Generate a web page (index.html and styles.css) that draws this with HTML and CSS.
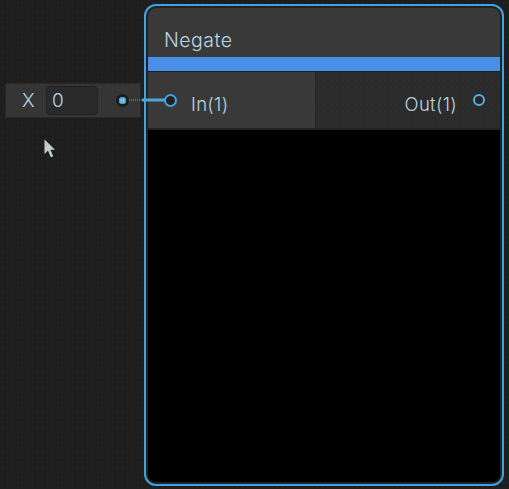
FILE: index.html
```html
<!DOCTYPE html>
<html>
<head>
<meta charset="utf-8">
<link rel="stylesheet" href="styles.css">
</head>
<body>
<div class="canvas">
  <div class="field">
    <span class="field-label">X</span>
    <div class="field-input">0</div>
    <span class="mini-port"><span class="mini-dot"></span></span>
  </div>

  <div class="node">
    <div class="node-inner">
      <div class="node-title">Negate</div>
      <div class="node-bar"></div>
      <div class="ports">
        <div class="port-in">
          <span class="port-circle"></span>
          <span class="port-label">In(1)</span>
        </div>
        <div class="port-out">
          <span class="port-label">Out(1)</span>
          <span class="port-circle out"></span>
        </div>
      </div>
      <div class="node-body"></div>
    </div>
  </div>

  <svg class="edge" width="50" height="8" viewBox="0 0 50 8">
    <line x1="0" y1="4" x2="13" y2="4" stroke="#5aaedc" stroke-width="1" stroke-dasharray="1 1"/>
    <rect x="13" y="2.5" width="23" height="3" fill="#4fa6da"/>
  </svg>

  <svg class="cursor" width="13" height="20" viewBox="0 0 13 20">
    <path d="M0.5 0.5 L0.5 15 L4 11.6 L6.8 18.2 L9.2 17.2 L6.4 10.7 L11 10.7 Z" fill="#c3cfcf"/>
  </svg>
</div>
</body>
</html>
```

FILE: styles.css
```css
* { box-sizing: border-box; }

html, body {
  margin: 0;
  padding: 0;
  background: #1e1e1e;
}

.canvas {
  position: relative;
  width: 509px;
  height: 489px;
  overflow: hidden;
  background-color: #1e1e1e;
  background-image: radial-gradient(circle, #2a2a2a 0.7px, transparent 0.9px);
  background-size: 5px 5px;
  font-family: Inter, "Noto Sans", sans-serif;
  font-weight: 300;
  color: #b9d6e2;
}

.field {
  position: absolute;
  left: 5px;
  top: 83px;
  width: 136px;
  height: 35px;
  background: #353535;
  border: 1px solid #282828;
  display: flex;
  align-items: center;
  padding-left: 16px;
}

.field-label {
  font-size: 19px;
  width: 24px;
  text-align: left;
}

.field-input {
  width: 52px;
  height: 29px;
  background: #2a2a2a;
  border: 1px solid #202020;
  border-radius: 4px;
  font-size: 19px;
  line-height: 27px;
  padding-left: 5px;
}

.mini-port {
  margin-left: 18px;
  width: 13px;
  height: 13px;
  border-radius: 50%;
  background: #1c1c1c;
  display: flex;
  align-items: center;
  justify-content: center;
}

.mini-dot {
  width: 7px;
  height: 7px;
  border-radius: 50%;
  background: #72bbe3;
  box-shadow: inset 0 0 0 1px #4a9fd3;
}

.node {
  position: absolute;
  left: 144px;
  top: 4px;
  width: 360px;
  height: 482px;
  border: 2px solid #3ea3e0;
  border-radius: 12px;
  padding: 2px;
  background: #222222;
}

.node-inner {
  width: 100%;
  height: 100%;
  border-radius: 8px;
  overflow: hidden;
  display: flex;
  flex-direction: column;
  background: #000;
}

.node-title {
  height: 49px;
  flex: none;
  background: #393939;
  font-size: 19.5px;
  line-height: 22px;
  padding: 21px 0 0 16px;
  letter-spacing: 0.5px;
}

.node-bar {
  height: 14px;
  flex: none;
  background: #4a8fe7;
  border-bottom: 1px solid #1f1f1f;
  box-sizing: content-box;
}

.ports {
  height: 58px;
  flex: none;
  display: flex;
  border-bottom: 2px solid #242424;
}

.port-in {
  width: 168px;
  background: #393939;
  border-right: 1px solid #252525;
  display: flex;
  align-items: center;
  padding-left: 16px;
}

.port-out {
  flex: 1;
  background-color: #2b2b2b;
  background-image: radial-gradient(circle, #343434 0.6px, transparent 0.8px);
  background-size: 6px 6px;
  display: flex;
  align-items: center;
  justify-content: flex-end;
  padding-right: 15px;
}

.port-label {
  font-size: 18.5px;
  line-height: 20px;
  padding-top: 7px;
  letter-spacing: 0.3px;
}

.port-in .port-label { margin-left: 14px; }
.port-out .port-label { margin-right: 16px; }

.port-circle {
  width: 13px;
  height: 13px;
  border-radius: 50%;
  border: 2px solid #3ea3e0;
  background: #222;
  flex: none;
}

.port-circle.out {
  width: 12px;
  height: 12px;
  border-color: #58aedb;
  background: #262626;
}

.node-body {
  flex: 1;
  background: #000;
}

.edge {
  position: absolute;
  left: 129px;
  top: 96px;
}

.cursor {
  position: absolute;
  left: 44px;
  top: 139px;
}
```
